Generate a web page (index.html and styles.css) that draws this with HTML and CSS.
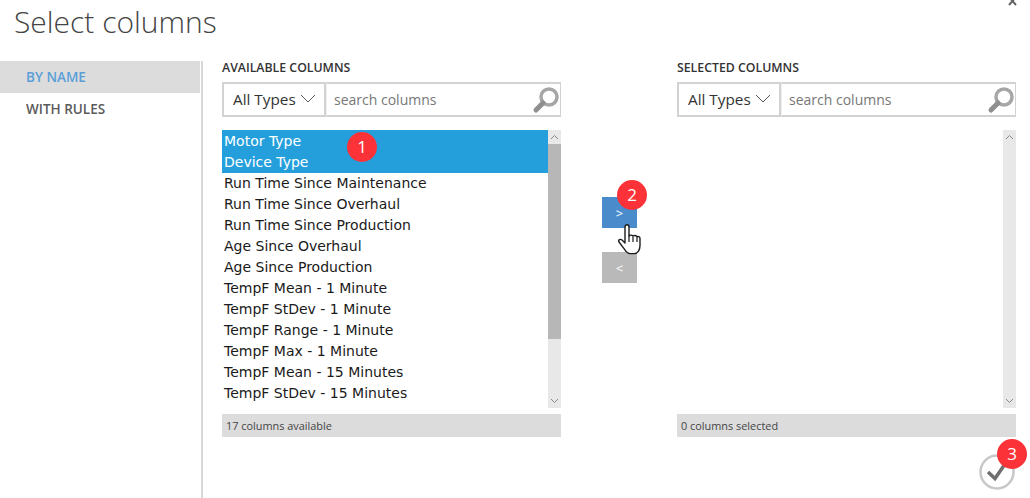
FILE: index.html
```html
<!DOCTYPE html>
<html lang="en">
  <head>
    <meta charset="UTF-8" />
    <title>Select columns</title>
    <link rel="stylesheet" href="styles.css">
  </head>
  <body>
    <div class="dialog">
      <div class="title-row">
        <h1 class="title">Select columns</h1>
        <svg class="close" width="10" height="6" viewBox="0 0 10 6"><path d="M1-3l7 8M8-3L1 5" fill="none" stroke="#666" stroke-width="2"/></svg>
      </div>
      <div class="content">
        <div class="side-nav">
          <div class="nav-item active">BY NAME</div>
          <div class="nav-item">WITH RULES</div>
        </div>
        <div class="picker">
          <div class="panel">
            <div class="panel-label">AVAILABLE COLUMNS</div>
            <div class="filters">
              <div class="type-select">All Types
                <svg class="chevron" width="16" height="9" viewBox="0 0 16 9"><path d="M1 1l7 7 7-7" fill="none" stroke="#555" stroke-width="1"/></svg>
              </div>
              <div class="search-box">
                <span class="search-text">search columns</span>
                <svg class="search-icon" width="28" height="30" viewBox="0 0 28 30"><circle cx="17" cy="12" r="8" fill="none" stroke="#a6a6a6" stroke-width="3.500"/><path d="M11 18l-7 7" stroke="#8f8f8f" stroke-width="5" stroke-linecap="round"/></svg>
              </div>
            </div>
            <div class="list-wrap">
              <ul class="column-list">
                <li class="selected">Motor Type</li>
                <li class="selected">Device Type</li>
                <li>Run Time Since Maintenance</li>
                <li>Run Time Since Overhaul</li>
                <li>Run Time Since Production</li>
                <li>Age Since Overhaul</li>
                <li>Age Since Production</li>
                <li>TempF Mean - 1 Minute</li>
                <li>TempF StDev - 1 Minute</li>
                <li>TempF Range - 1 Minute</li>
                <li>TempF Max - 1 Minute</li>
                <li>TempF Mean - 15 Minutes</li>
                <li>TempF StDev - 15 Minutes</li>
              </ul>
              <div class="scrollbar">
                <svg class="arrow" width="13" height="14" viewBox="0 0 13 14"><path d="M3 9l3.500-3.500L10 9" fill="none" stroke="#888" stroke-width="1"/></svg>
                <div class="thumb"></div>
                <div class="track"></div>
                <svg class="arrow" width="13" height="14" viewBox="0 0 13 14"><path d="M3 5l3.500 3.500L10 5" fill="none" stroke="#888" stroke-width="1"/></svg>
              </div>
            </div>
            <div class="status">17 columns available</div>
          </div>

          <div class="move-buttons">
            <div class="move-btn add">&gt;</div>
            <div class="move-btn remove">&lt;</div>
          </div>

          <div class="panel">
            <div class="panel-label">SELECTED COLUMNS</div>
            <div class="filters">
              <div class="type-select">All Types
                <svg class="chevron" width="16" height="9" viewBox="0 0 16 9"><path d="M1 1l7 7 7-7" fill="none" stroke="#555" stroke-width="1"/></svg>
              </div>
              <div class="search-box">
                <span class="search-text">search columns</span>
                <svg class="search-icon" width="28" height="30" viewBox="0 0 28 30"><circle cx="17" cy="12" r="8" fill="none" stroke="#a6a6a6" stroke-width="3.500"/><path d="M11 18l-7 7" stroke="#8f8f8f" stroke-width="5" stroke-linecap="round"/></svg>
              </div>
            </div>
            <div class="list-wrap">
              <ul class="column-list"></ul>
              <div class="scrollbar">
                <svg class="arrow" width="13" height="14" viewBox="0 0 13 14"><path d="M3 9l3.500-3.500L10 9" fill="none" stroke="#888" stroke-width="1"/></svg>
                <div class="track"></div>
                <svg class="arrow" width="13" height="14" viewBox="0 0 13 14"><path d="M3 5l3.500 3.500L10 5" fill="none" stroke="#888" stroke-width="1"/></svg>
              </div>
            </div>
            <div class="status">0 columns selected</div>
          </div>
        </div>
      </div>

      <svg class="check-btn" width="36" height="36" viewBox="0 0 36 36"><circle cx="18" cy="18" r="16.500" fill="#fff" stroke="#c8c8c8" stroke-width="2.500"/><path d="M9 18l7 6.500 9-13" fill="none" stroke="#6f6f6f" stroke-width="3.500"/></svg>

      <svg class="hand" width="26" height="32" viewBox="0 0 26 32"><path d="M7 3c0-3 4-3 4 0v9c1-1 3-1 4 0 1-.6 3-.6 4 .6 1-.4 3 0 3 2v7c0 4-2 8-6 8h-4c-3 0-4-2-6-5L1 18c-1-2 1-3.500 3-2l3 3z" fill="#fff" stroke="#1c1c1c" stroke-width="1.400" stroke-linejoin="round"/><path d="M11 12v6M15 12.500v5.500M19 13v5" fill="none" stroke="#1c1c1c" stroke-width="1.200"/></svg>

      <span class="badge badge-one">1</span>
      <span class="badge badge-two">2</span>
      <span class="badge badge-three">3</span>
    </div>
  </body>
</html>
```

FILE: styles.css
```css
html,
body {
  margin: 0;
  height: 100%;
  overflow: hidden;
  background-color: #fff;
  font-family: "Open Sans", "Noto Sans", sans-serif;
}
.dialog {
  position: relative;
  width: 1030px;
  height: 498px;
  overflow: hidden;
}
.title-row {
  display: flex;
  justify-content: space-between;
  height: 61px;
  padding: 0 14px;
}
.title {
  margin: 2px 0 0;
  font-size: 30px;
  line-height: 40px;
  font-weight: 300;
  color: #444;
}
.close {
  flex: none;
  margin-right: -2px;
}
.content {
  display: flex;
  height: 437px;
}
.side-nav {
  width: 200px;
  padding-right: 1px;
  border-right: 2px solid #d8d8d8;
}
.nav-item {
  height: 32px;
  padding-left: 26px;
  font-size: 13.500px;
  line-height: 32px;
  font-weight: 600;
  color: #5a5a5a;
}
.nav-item.active {
  background-color: #dcdcdc;
  color: #5a9fd8;
}
.picker {
  display: flex;
  padding-left: 19px;
}
.panel {
  width: 339px;
}
.panel-label {
  height: 21px;
  font-size: 12.300px;
  line-height: 13px;
  font-weight: 600;
  color: #333;
}
.filters {
  display: flex;
  height: 35px;
}
.type-select {
  display: flex;
  align-items: center;
  justify-content: space-between;
  box-sizing: border-box;
  width: 104px;
  padding: 0 8px 2px 9px;
  border: 2px solid #d2d2d2;
  font-size: 15.300px;
  color: #333;
}
.search-box {
  flex: 1;
  display: flex;
  align-items: center;
  justify-content: space-between;
  box-sizing: border-box;
  padding-left: 7px;
  border: 1px solid #d2d2d2;
  border-top-width: 2px;
  border-bottom-width: 2px;
  border-left-color: #eee;
  font-size: 14px;
  color: #777;
}
.search-icon {
  flex: none;
}
.list-wrap {
  display: flex;
  height: 278px;
  margin-top: 13px;
}
.column-list {
  flex: 1;
  margin: 0;
  padding: 0;
  list-style: none;
  font-family: "DejaVu Sans", sans-serif;
  font-size: 14px;
  line-height: 21px;
  color: #1a1a1a;
}
.column-list li {
  height: 21px;
  padding-left: 2px;
}
.column-list li.selected {
  background-color: #259fdc;
  color: #fff;
}
.column-list li.selected:first-child {
  height: 22px;
  line-height: 22px;
}
.scrollbar {
  display: flex;
  flex-direction: column;
  width: 13px;
  background-color: #e8e8e8;
}
.arrow {
  flex: none;
}
.thumb {
  height: 195px;
  background-color: #b7b7b7;
}
.track {
  flex: 1;
}
.status {
  height: 23px;
  margin-top: 6px;
  padding-left: 4px;
  background-color: #dcdcdc;
  font-size: 10.900px;
  line-height: 23px;
  color: #444;
}
.move-buttons {
  display: flex;
  flex-direction: column;
  gap: 24px;
  box-sizing: border-box;
  width: 116px;
  padding: 136px 0 0 41px;
}
.move-btn {
  width: 35px;
  height: 31px;
  font-size: 13px;
  line-height: 32px;
  text-align: center;
  color: #fff;
}
.move-btn.add {
  background-color: #4a8ccb;
}
.move-btn.remove {
  background-color: #b9b9b9;
}
.check-btn {
  position: absolute;
  left: 979px;
  top: 454px;
}
.hand {
  position: absolute;
  left: 618px;
  top: 224px;
}
.badge {
  position: absolute;
  width: 30px;
  height: 30px;
  border-radius: 50%;
  background-color: #fb3237;
  font-size: 17px;
  line-height: 30px;
  text-align: center;
  color: #fff;
}
.badge-one {
  left: 347px;
  top: 132px;
}
.badge-two {
  left: 617px;
  top: 180px;
}
.badge-three {
  left: 997px;
  top: 439px;
}
```
